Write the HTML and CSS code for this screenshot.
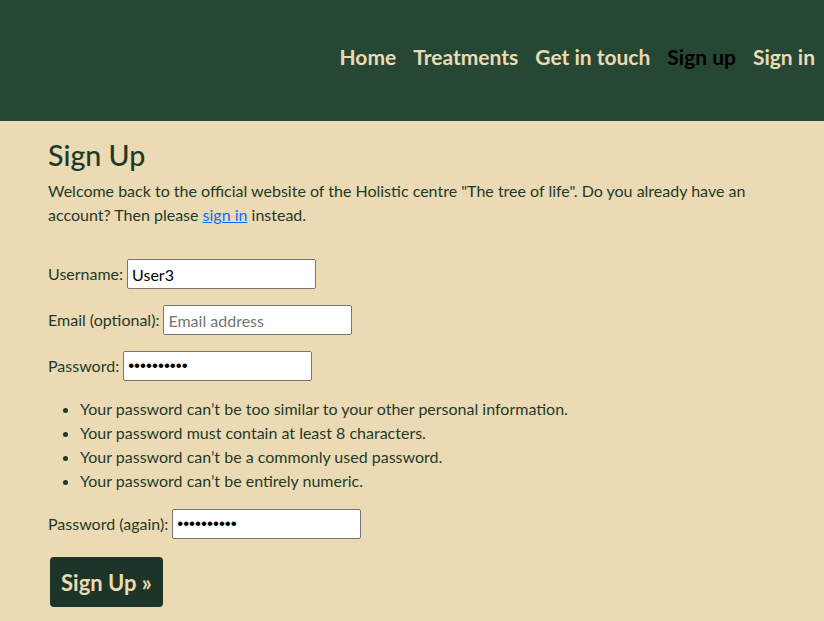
FILE: index.html
```html
<!DOCTYPE html>
<html lang="en">
<head>
<meta charset="utf-8">
<title>Sign Up</title>
<link rel="stylesheet" href="styles.css">
</head>
<body>
<header class="site-header">
  <nav class="nav">
    <a class="nav-link" href="#">Home</a>
    <a class="nav-link" href="#">Treatments</a>
    <a class="nav-link" href="#">Get in touch</a>
    <a class="nav-link active" href="#">Sign up</a>
    <a class="nav-link" href="#">Sign in</a>
  </nav>
</header>
<main class="content">
  <h2 class="title">Sign Up</h2>
  <p class="intro">Welcome back to the official website of the Holistic centre "The tree of life". Do you already have an account? Then please <a href="#" class="link">sign in</a> instead.</p>
  <form class="form">
    <p class="row"><label>Username:</label> <input class="field" type="text" value="User3"></p>
    <p class="row"><label>Email (optional):</label> <input class="field" type="email" placeholder="Email address"></p>
    <p class="row"><label>Password:</label> <input class="field pw" type="password" value="0123456789"></p>
    <ul class="help">
      <li>Your password can’t be too similar to your other personal information.</li>
      <li>Your password must contain at least 8 characters.</li>
      <li>Your password can’t be a commonly used password.</li>
      <li>Your password can’t be entirely numeric.</li>
    </ul>
    <p class="row"><label>Password (again):</label> <input class="field pw" type="password" value="0123456789"></p>
    <button class="btn" type="button">Sign Up »</button>
  </form>
</main>
</body>
</html>
```
FILE: styles.css
```css
* { box-sizing: border-box; }
html, body { margin: 0; padding: 0; }
body {
  background: #ecdab4;
  color: #1d3a2a;
  font-family: Lato, "Noto Sans", sans-serif;
  font-size: 16px;
  line-height: 24px;
  height: 621px;
  overflow: hidden;
}
.site-header {
  background: #264733;
  height: 121px;
  display: flex;
  justify-content: flex-end;
  align-items: flex-start;
  padding: 43px 9px 0 0;
}
.nav { display: flex; gap: 17px; }
.nav-link {
  color: #ecdab4;
  text-decoration: none;
  font-weight: 700;
  font-size: 21px;
  line-height: 28px;
}
.nav-link.active { color: #000; }
.content { padding: 17px 48px 0 48px; max-width: 824px; }
.title {
  margin: 0 0 7px;
  font-size: 28.6px;
  line-height: 34px;
  font-weight: 500;
  color: #1d3a2a;
}
.intro { margin: 0 0 32px; }
.link { color: #0d6efd; }
.form { margin: 0; }
.row { margin: 0 0 16px; display: flex; align-items: center; gap: 4px; height: 30px; }
.field {
  width: 189px;
  height: 30px;
  border: 1px solid #767676;
  border-radius: 2px;
  padding: 1px 4px;
  font-family: inherit;
  font-size: 16px;
  color: #000;
  background: #fff;
}
.field.pw { font-family: "Liberation Sans", sans-serif; font-size: 17px; }
.field::placeholder { color: #757575; }
.help { margin: 0 0 16px; padding-left: 32px; }
.btn {
  margin: 2px 0 0 2px;
  background: #1d3528;
  color: #ecdab4;
  border: none;
  border-radius: 4px;
  font-family: inherit;
  font-weight: 700;
  font-size: 22px;
  width: 113px;
  height: 50px;
  padding: 0;
}
```
